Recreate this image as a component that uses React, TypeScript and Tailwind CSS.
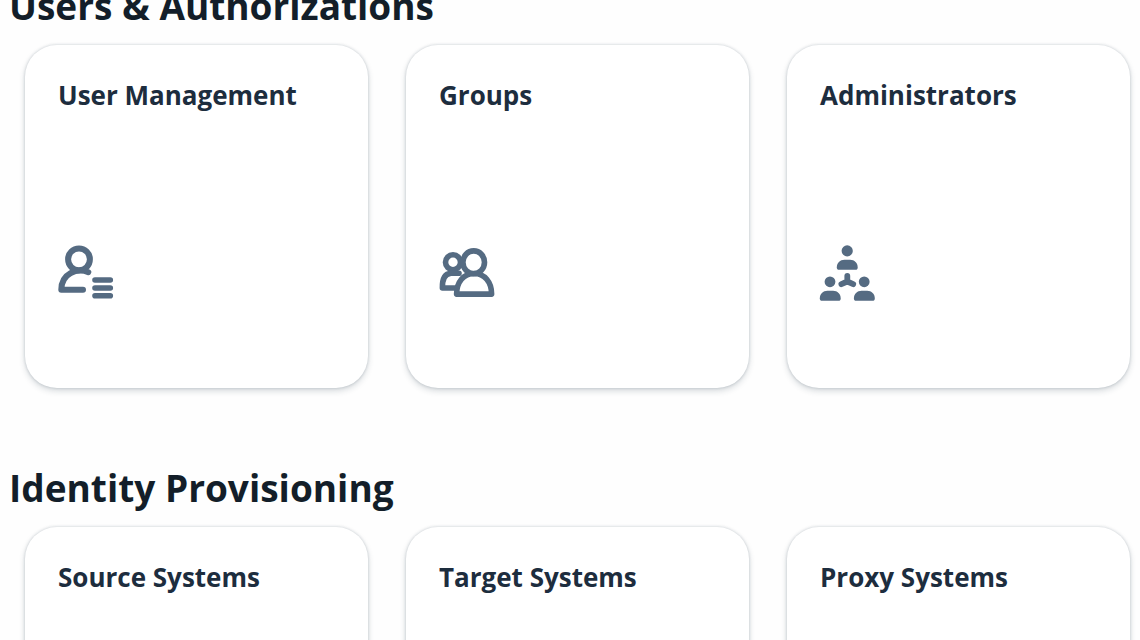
import type { ReactNode } from 'react';

interface Tile {
  title: string;
  href: string;
  icon?: ReactNode;
}

interface Section {
  title: string;
  tiles: Tile[];
}

const UserListIcon = () => (
  <svg viewBox="0 0 58 58" className="size-[58px]" fill="none" stroke="currentColor" strokeWidth="6" strokeLinecap="round" strokeLinejoin="round" aria-hidden="true">
    <circle cx="22" cy="14.3" r="10.9" />
    <path d="M31.3 27.2C20 22.5 4.3 28.5 4.3 44.8H26" />
    <path d="M38 35H53.3M38 43H53.3M38 50.8H53.3" strokeWidth="5.6" />
  </svg>
);

const GroupIcon = () => (
  <svg viewBox="0 0 58 58" className="size-[58px]" fill="none" stroke="currentColor" strokeWidth="5.6" strokeLinecap="round" strokeLinejoin="round" aria-hidden="true">
    <circle cx="15" cy="17.3" r="7.5" />
    <path d="M18 43H4.4C4.2 35 6 28.6 13 28.2H21" />
    <ellipse cx="35.7" cy="17.3" rx="10.8" ry="11.4" />
    <path d="M18.6 49.1H53.6C53.6 37 46.5 28.5 36.1 28.5S18.6 37 18.6 49.1Z" />
  </svg>
);

const OrgIcon = () => (
  <svg viewBox="1 0 58 58" className="size-[58px]" fill="currentColor" aria-hidden="true">
    <circle cx="29.2" cy="5.9" r="5.6" />
    <path d="M18.8 22.5C18.8 18 22 14.8 26.5 14.8H32C36.5 14.8 39.7 18 39.7 22.5C39.7 24 38.9 24.8 37.5 24.8H21C19.6 24.8 18.8 24 18.8 22.5Z" />
    <path d="M29.3 30.8V36.5L23.4 39.2M29.3 36.5L35.2 39.2" fill="none" stroke="currentColor" strokeWidth="5.8" strokeLinecap="round" strokeLinejoin="round" />
    <circle cx="12" cy="36.8" r="5.4" />
    <circle cx="46.2" cy="36.8" r="5.4" />
    <path d="M1.8 53.5C1.8 49 5 45.8 9.5 45.8H15C19.5 45.8 22.7 49 22.7 53.5C22.7 55 21.9 55.8 20.5 55.8H4C2.6 55.8 1.8 55 1.8 53.5Z" />
    <path d="M35.9 53.5C35.9 49 39.1 45.8 43.6 45.8H49.1C53.6 45.8 56.8 49 56.8 53.5C56.8 55 56 55.8 54.6 55.8H38.1C36.7 55.8 35.9 55 35.9 53.5Z" />
  </svg>
);

const sections: Section[] = [
  {
    title: 'Users & Authorizations',
    tiles: [
      { title: 'User Management', href: '#users', icon: <UserListIcon /> },
      { title: 'Groups', href: '#groups', icon: <GroupIcon /> },
      { title: 'Administrators', href: '#administrators', icon: <OrgIcon /> },
    ],
  },
  {
    title: 'Identity Provisioning',
    tiles: [
      { title: 'Source Systems', href: '#source-systems' },
      { title: 'Target Systems', href: '#target-systems' },
      { title: 'Proxy Systems', href: '#proxy-systems' },
    ],
  },
];

function TileCard({ tile }: { tile: Tile }) {
  return (
    <a
      href={tile.href}
      className="flex aspect-square flex-col justify-between rounded-[32px] bg-white px-[33px] pt-8 pb-[85px] shadow-[0_0_3px_rgba(34,53,72,0.22),0_3px_6px_rgba(34,53,72,0.18)]"
    >
      <h3 className="text-[26px] leading-9 font-bold text-[#1d2d3e]">{tile.title}</h3>
      <div className="-ml-px text-[#556b82]">{tile.icon}</div>
    </a>
  );
}

export default function App() {
  return (
    <div className="h-screen overflow-hidden bg-[#fefefe] font-['Open_Sans',sans-serif]">
      {/* page is scrolled slightly past the first heading */}
      <main className="-mt-5 flex flex-col gap-[74px] pr-[10px] pl-[9px]">
        {sections.map((section) => (
          <section key={section.title}>
            <h2 className="mb-[13px] text-[37px] leading-[52px] font-bold text-[#131e29]">{section.title}</h2>
            <div className="grid grid-cols-3 gap-[38px] pl-4">
              {section.tiles.map((tile) => (
                <TileCard key={tile.title} tile={tile} />
              ))}
            </div>
          </section>
        ))}
      </main>
    </div>
  );
}
